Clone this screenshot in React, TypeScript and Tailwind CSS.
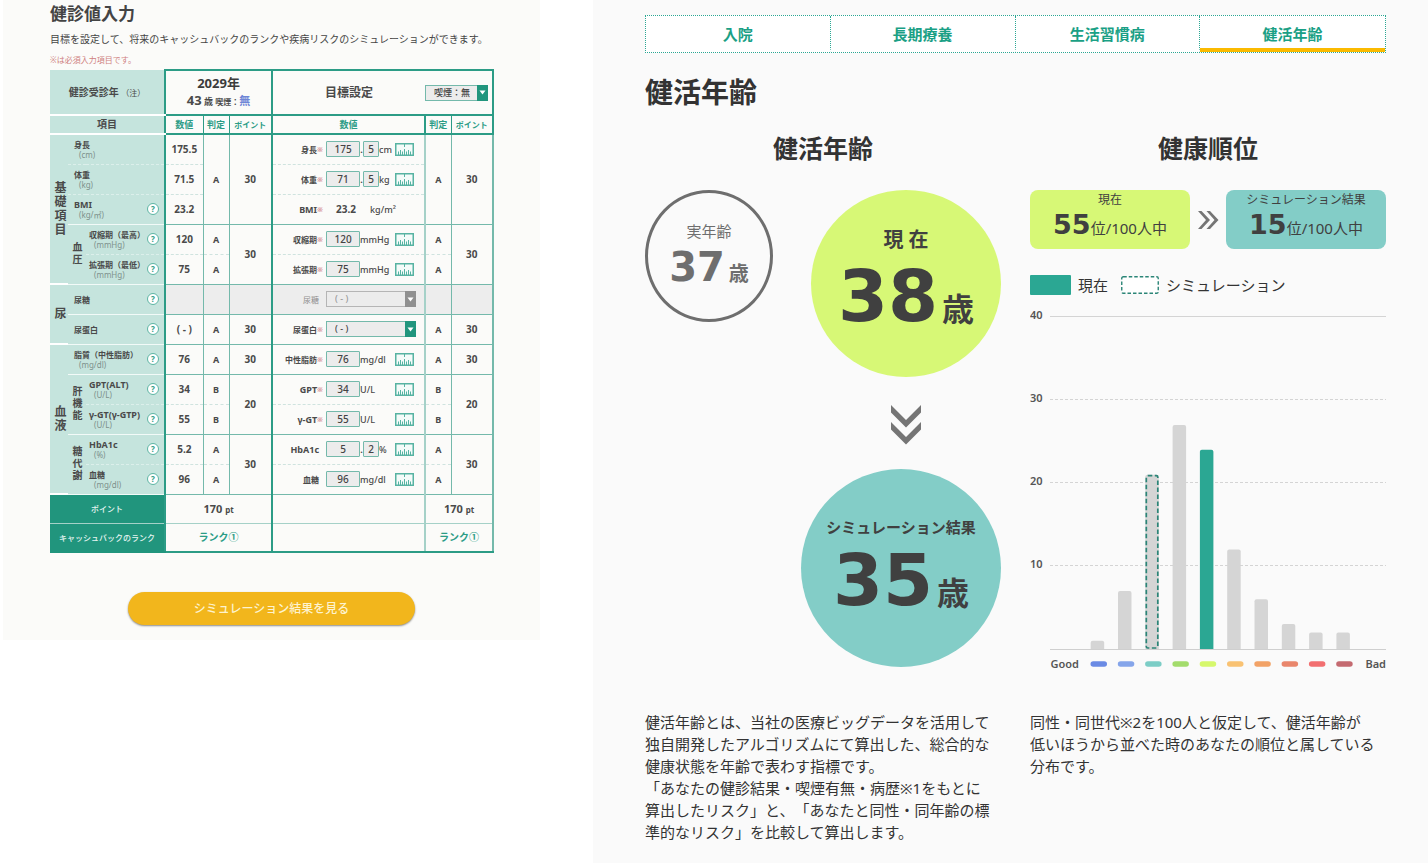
import { useState } from 'react';
import type { ReactNode } from 'react';
import clsx from 'clsx';

type Field =
    | { kind: 'number'; value: string; decimal?: string; unit: string }
    | { kind: 'text'; value: string; unit: string }
    | { kind: 'select'; value: string; disabled?: boolean };

type Row = {
    id: string;
    group?: { label: string; span: number };
    sub?: { label: string; span: number };
    nested?: boolean;
    label: string;
    unit?: string;
    help?: boolean;
    value: string;
    grade?: { label: string; span: number };
    point?: { label: string; span: number };
    target: string;
    required?: boolean;
    field: Field;
    line: 'solid' | 'dashed';
    gradeLine?: 'solid' | 'dashed';
    disabled?: boolean;
};

const ROWS: Row[] = [
    { id: 'height', group: { label: '基礎項目', span: 5 }, label: '身長', unit: '(cm)', value: '175.5', grade: { label: 'A', span: 3 }, point: { label: '30', span: 3 }, target: '身長', required: true, field: { kind: 'number', value: '175', decimal: '5', unit: 'cm' }, line: 'dashed', gradeLine: 'solid' },
    { id: 'weight', label: '体重', unit: '(kg)', value: '71.5', target: '体重', required: true, field: { kind: 'number', value: '71', decimal: '5', unit: 'kg' }, line: 'dashed' },
    { id: 'bmi', label: 'BMI', unit: '(kg/㎡)', help: true, value: '23.2', target: 'BMI', required: true, field: { kind: 'text', value: '23.2', unit: 'kg/m²' }, line: 'solid' },
    { id: 'systolic', sub: { label: '血圧', span: 2 }, nested: true, label: '収縮期（最高）', unit: '(mmHg)', help: true, value: '120', grade: { label: 'A', span: 1 }, point: { label: '30', span: 2 }, target: '収縮期', required: true, field: { kind: 'number', value: '120', unit: 'mmHg' }, line: 'dashed' },
    { id: 'diastolic', nested: true, label: '拡張期（最低）', unit: '(mmHg)', help: true, value: '75', grade: { label: 'A', span: 1 }, target: '拡張期', required: true, field: { kind: 'number', value: '75', unit: 'mmHg' }, line: 'solid' },
    { id: 'sugar', group: { label: '尿', span: 2 }, label: '尿糖', help: true, value: '', grade: { label: '', span: 1 }, point: { label: '', span: 1 }, target: '尿糖', field: { kind: 'select', value: '( - )', disabled: true }, line: 'solid', disabled: true },
    { id: 'protein', label: '尿蛋白', help: true, value: '( - )', grade: { label: 'A', span: 1 }, point: { label: '30', span: 1 }, target: '尿蛋白', required: true, field: { kind: 'select', value: '( - )' }, line: 'solid' },
    { id: 'lipid', group: { label: '血液', span: 5 }, label: '脂質（中性脂肪）', unit: '(mg/dl)', help: true, value: '76', grade: { label: 'A', span: 1 }, point: { label: '30', span: 1 }, target: '中性脂肪', required: true, field: { kind: 'number', value: '76', unit: 'mg/dl' }, line: 'solid' },
    { id: 'gpt', sub: { label: '肝機能', span: 2 }, nested: true, label: 'GPT(ALT)', unit: '(U/L)', help: true, value: '34', grade: { label: 'B', span: 1 }, point: { label: '20', span: 2 }, target: 'GPT', required: true, field: { kind: 'number', value: '34', unit: 'U/L' }, line: 'dashed' },
    { id: 'ggt', nested: true, label: 'γ-GT(γ-GTP)', unit: '(U/L)', help: true, value: '55', grade: { label: 'B', span: 1 }, target: 'γ-GT', required: true, field: { kind: 'number', value: '55', unit: 'U/L' }, line: 'solid' },
    { id: 'hba1c', sub: { label: '糖代謝', span: 2 }, nested: true, label: 'HbA1c', unit: '(%)', help: true, value: '5.2', grade: { label: 'A', span: 1 }, point: { label: '30', span: 2 }, target: 'HbA1c', field: { kind: 'number', value: '5', decimal: '2', unit: '%' }, line: 'dashed' },
    { id: 'glucose', nested: true, label: '血糖', unit: '(mg/dl)', help: true, value: '96', grade: { label: 'A', span: 1 }, target: '血糖', field: { kind: 'number', value: '96', unit: 'mg/dl' }, line: 'solid' },
];

const TABS = ['入院', '長期療養', '生活習慣病', '健活年齢'];

const BARS = [
    { value: 1, color: '#6a8ae4' },
    { value: 7, color: '#85a5ea' },
    { value: 21, color: '#7ccdc6', simulated: true },
    { value: 27, color: '#a3dc6c' },
    { value: 24, color: '#d6f86c', current: true },
    { value: 12, color: '#f9c272' },
    { value: 6, color: '#f2a266' },
    { value: 3, color: '#e9866c' },
    { value: 2, color: '#f26f70' },
    { value: 2, color: '#c46a70' },
];

const GREEN = 'border-[#2c9c86]';
const PALE = 'border-[#74b9ab]';

// kanji labels run one size smaller than latin ones
const labelSize = (text: string) => (/[一-龠]/.test(text) ? 'text-[8px]' : 'text-[9px]');

const RulerIcon = () => (
    <svg width="19" height="13" viewBox="0 0 19 13" aria-hidden="true">
        <rect x="0.75" y="0.75" width="17.5" height="11.5" fill="#f4fbf9" stroke="#57b3a2" strokeWidth="1.5" />
        <path d="M3.5 12V8.5M5.5 12V7M7.5 12V8.5M9.5 12V6M11.5 12V8.5M13.5 12V7M15.5 12V8.5" stroke="#57b3a2" strokeWidth="1" />
        <path d="M9.5 1v3" stroke="#57b3a2" strokeWidth="1" />
    </svg>
);

const HelpButton = ({ label }: { label: string }) => (
    <button
        type="button"
        aria-label={label}
        className="flex h-3 w-3 shrink-0 items-center justify-center rounded-full border border-[#5db5a4] bg-white text-[8px] leading-none font-bold text-[#2c9c86]"
    >
        ?
    </button>
);

const Dropdown = ({ id, value, label, disabled, className }: { id: string; value: string; label?: string; disabled?: boolean; className: string }) => (
    <span className={clsx('relative inline-block h-4', className)}>
        <select
            id={id}
            aria-label={label}
            disabled={disabled}
            defaultValue={value}
            className={clsx(
                'block h-4 w-full appearance-none border bg-[#ececec] py-0 pr-3 pl-2 text-[9px] leading-[14px] font-medium',
                disabled ? 'border-[#b5b5b5] text-[#999]' : 'border-[#74b9ab] text-[#444]',
            )}
        >
            <option>{value}</option>
        </select>
        <span
            className={clsx(
                'pointer-events-none absolute inset-y-0 right-0 flex w-[11px] items-center justify-center',
                disabled ? 'bg-[#909090]' : 'bg-[#21957d]',
            )}
        >
            <svg width="7" height="5" viewBox="0 0 7 5" aria-hidden="true">
                <path d="M0.5 0.5h6L3.5 4.5z" fill="#fff" />
            </svg>
        </span>
    </span>
);

const NumberBox = ({ id, value, label, className }: { id: string; value: string; label?: string; className: string }) => (
    <input
        id={id}
        aria-label={label}
        defaultValue={value}
        inputMode="numeric"
        className={clsx('h-4 rounded-[1px] border border-[#74b9ab] bg-[#ececec] p-0 text-center text-[10px] leading-[14px] font-medium text-[#444]', className)}
    />
);

const TargetField = ({ row }: { row: Row }) => {
    const { field } = row;

    return (
        <div className="flex items-center">
            <label
                htmlFor={field.kind === 'text' ? undefined : row.id}
                className={clsx(
                    'flex w-[50px] shrink-0 items-center justify-end whitespace-nowrap',
                    labelSize(row.target),
                    row.disabled && 'font-normal text-[#8f8f8f]',
                    !row.required && 'pr-1',
                )}
            >
                {row.target}
                {row.required && <span className="text-[7px] text-[#d99a9f]">※</span>}
            </label>
            {field.kind === 'select' && <Dropdown id={row.id} value={field.value} disabled={field.disabled} className="ml-[3px] w-[90px]" />}
            {field.kind === 'text' && (
                <>
                    <span className="ml-[3px] w-[40px] text-center text-[10px]">{field.value}</span>
                    <span className="ml-1 font-medium">{field.unit}</span>
                </>
            )}
            {field.kind === 'number' && (
                <>
                    <NumberBox id={row.id} value={field.value} className="ml-[3px] w-[34px]" />
                    {field.decimal && (
                        <>
                            <span className="w-[3px] text-center">.</span>
                            <NumberBox id={`${row.id}-decimal`} value={field.decimal} label={`${row.target} 小数`} className="w-4" />
                        </>
                    )}
                    <span className="flex-1 text-left font-medium">{field.unit}</span>
                    <button type="button" aria-label={`${row.target}を選択`} className="mr-[10px] shrink-0">
                        <RulerIcon />
                    </button>
                </>
            )}
        </div>
    );
};

const Vertical = ({ children, className }: { children: ReactNode; className: string }) => (
    <span className={clsx('inline-block align-middle [writing-mode:vertical-rl]', className)}>{children}</span>
);

const CheckupTable = () => (
    <table className="mt-[3px] w-full table-fixed border-collapse text-center text-[9px] leading-[11px] font-bold text-[#4a4a4a]">
        <colgroup>
            <col className="w-[18px]" />
            <col className="w-[18px]" />
            <col className="w-[79px]" />
            <col className="w-[38px]" />
            <col className="w-[26px]" />
            <col className="w-[43px]" />
            <col className="w-[153px]" />
            <col className="w-[26px]" />
            <col className="w-[42px]" />
        </colgroup>
        <thead>
            <tr className="h-[45px]">
                <th colSpan={3} className="border-b-2 border-white bg-[#c5e4dd] p-0 text-[10px]">
                    健診受診年 <span className="text-[8px] font-normal">（注）</span>
                </th>
                <th colSpan={3} className={clsx('border-2 p-0', GREEN)}>
                    <div className="text-[13px] leading-4 text-[#3c3c3c]">2029年</div>
                    <div className="leading-[18px]">
                        <span className="text-[13px]">43</span> 歳 <span className="text-[8px]">喫煙：</span>
                        <span className="text-[11px] text-[#6f86d6]">無</span>
                    </div>
                </th>
                <th className={clsx('border-y-2 p-0 text-[12px]', GREEN)}>目標設定</th>
                <td colSpan={2} className={clsx('border-y-2 border-r-2 p-0 pr-1', GREEN)}>
                    <Dropdown id="smoking" value="喫煙：無" label="喫煙" className="w-full" />
                </td>
            </tr>
            <tr className="h-[19px] text-[#2c9c86]">
                <th colSpan={3} className="border-b-2 border-white bg-[#c5e4dd] p-0 text-[10px] text-[#4a4a4a]">
                    項目
                </th>
                <th className={clsx('border-2 border-r p-0', GREEN)}>数値</th>
                <th className={clsx('border-b-2 p-0', GREEN)}>判定</th>
                <th className={clsx('border-2 border-l p-0 text-[8px]', GREEN)}>ポイント</th>
                <th className={clsx('border-2 p-0', GREEN)}>数値</th>
                <th className={clsx('border-2 border-r p-0', GREEN)}>判定</th>
                <th className={clsx('border-2 border-l p-0 text-[8px]', GREEN)}>ポイント</th>
            </tr>
        </thead>
        <tbody>
            {ROWS.map((row) => {
                const line = row.line === 'solid' ? 'border-b border-b-[#74b9ab]' : 'border-b border-b-[#cfe3df] [border-bottom-style:dashed]';
                const gradeLine = (row.gradeLine ?? row.line) === 'solid' ? 'border-b border-b-[#74b9ab]' : 'border-b border-b-[#cfe3df] [border-bottom-style:dashed]';
                const headLine = row.line === 'solid' ? 'border-b border-b-[#f2faf8]' : 'border-b border-b-[#dcefeb] [border-bottom-style:dashed]';
                const fill = row.disabled && 'bg-[#ededed]';

                return (
                    <tr key={row.id} className="h-[30px]">
                        {row.group && (
                            <th rowSpan={row.group.span} className="border-b-2 border-white bg-[#c5e4dd] p-0">
                                <Vertical className="text-[12px] leading-[14px] tracking-[2px]">{row.group.label}</Vertical>
                            </th>
                        )}
                        {row.sub && (
                            <th rowSpan={row.sub.span} className="border-b border-[#f2faf8] bg-[#c5e4dd] p-0">
                                <Vertical className="text-[10px] leading-3 tracking-[2px]">{row.sub.label}</Vertical>
                            </th>
                        )}
                        <th colSpan={row.nested ? 1 : 2} className={clsx('bg-[#c5e4dd] p-0', headLine)}>
                            <div className={clsx('flex items-center justify-between pr-[5px] text-left', row.nested ? 'pl-[3px]' : 'pl-[6px]')}>
                                <div className="whitespace-nowrap">
                                    <div className={labelSize(row.label)}>{row.label}</div>
                                    {row.unit && <div className="pl-[5px] text-[8px] leading-[10px] font-normal text-[#7d918c]">{row.unit}</div>}
                                </div>
                                {row.help && <HelpButton label={`${row.label}の説明`} />}
                            </div>
                        </th>
                        <td className={clsx('border-r border-l-2 border-r-[#74b9ab] border-l-[#2c9c86] p-0 text-[10px]', line, fill)}>{row.value}</td>
                        {row.grade && (
                            <td rowSpan={row.grade.span} className={clsx('border-r border-r-[#74b9ab] p-0', gradeLine, fill)}>
                                {row.grade.label}
                            </td>
                        )}
                        {row.point && (
                            <td rowSpan={row.point.span} className={clsx('border-b p-0 text-[10px]', PALE, fill)}>
                                {row.point.label}
                            </td>
                        )}
                        <td className={clsx('border-r-2 border-l-2 border-r-[#a5d1c8] border-l-[#2c9c86] p-0', line, fill)}>
                            <TargetField row={row} />
                        </td>
                        {row.grade && (
                            <td rowSpan={row.grade.span} className={clsx('border-r border-r-[#74b9ab] p-0', gradeLine, fill)}>
                                {row.grade.label}
                            </td>
                        )}
                        {row.point && (
                            <td rowSpan={row.point.span} className={clsx('border-r-2 border-b border-r-[#74b9ab] border-b-[#74b9ab] p-0 text-[10px]', fill)}>
                                {row.point.label}
                            </td>
                        )}
                    </tr>
                );
            })}
        </tbody>
        <tfoot>
            <tr className="h-[29px]">
                <th colSpan={3} className="border-b border-[#a5d1c8] bg-[#21957d] p-0 text-[8px] font-medium text-[#e4f4f1]">
                    ポイント
                </th>
                <td colSpan={3} className="border-x-2 border-b border-x-[#2c9c86] border-b-[#a5d1c8] p-0 text-[11px]">
                    170 <span className="text-[8px]">pt</span>
                </td>
                <td className="border-r-2 border-b border-[#a5d1c8] p-0" />
                <td colSpan={2} className="border-r-2 border-b border-r-[#74b9ab] border-b-[#a5d1c8] p-0 text-[11px]">
                    170 <span className="text-[8px]">pt</span>
                </td>
            </tr>
            <tr className="h-[29px] text-[10px] text-[#2c9c86]">
                <th colSpan={3} className="border-b-2 border-[#21957d] bg-[#21957d] p-0 text-[8px] font-medium text-[#e4f4f1]">
                    キャッシュバックのランク
                </th>
                <td colSpan={3} className={clsx('border-x-2 border-b-2 p-0', GREEN)}>
                    ランク①
                </td>
                <td className="border-r-2 border-b-2 border-r-[#a5d1c8] border-b-[#2c9c86] p-0" />
                <td colSpan={2} className="border-r-2 border-b-2 border-r-[#74b9ab] border-b-[#2c9c86] p-0">
                    ランク①
                </td>
            </tr>
        </tfoot>
    </table>
);

const CheckupPanel = () => (
    <section className="flex flex-col self-start bg-[#fbfbf9] px-[47px] pt-0.5 pb-[15px]">
        <h1 className="text-[17px] leading-6 font-bold text-[#444]">健診値入力</h1>
        <p className="mt-[5px] text-[10px] leading-4 whitespace-nowrap text-[#444]">
            目標を設定して、将来のキャッシュバックのランクや疾病リスクのシミュレーションができます。
        </p>
        <p className="mt-[7px] text-[8px] leading-3 text-[#cf7f80]">※は必須入力項目です。</p>
        <CheckupTable />
        <button
            type="button"
            className="mx-auto mt-[39px] h-[33px] w-[65%] rounded-full bg-[#f2b61c] text-[12px] font-medium text-[#fdf3cf] shadow-[0_1px_2px_rgba(0,0,0,0.45)]"
        >
            シミュレーション結果を見る
        </button>
    </section>
);

const Age = ({ value, size, unitSize }: { value: number; size: string; unitSize: string }) => (
    <div className="flex items-baseline gap-1 font-bold">
        <span className={clsx("font-['DejaVu_Sans',sans-serif]", size)}>{value}</span>
        <span className={unitSize}>歳</span>
    </div>
);

const AgeCircles = () => (
    <div className="mt-[27px] flex items-start justify-between">
        <div className="flex h-[132px] w-[128px] flex-col items-center rounded-[50%] border-3 border-[#6e6e6e] pt-[27px] text-[#6e6e6e]">
            <span className="text-[15px] leading-[22px]">実年齢</span>
            <Age value={37} size="text-[40px] leading-[50px]" unitSize="text-[20px]" />
        </div>
        <div className="flex flex-col items-end text-[#404040]">
            <div className="flex h-[187px] w-[190px] flex-col items-center rounded-[50%] bg-[#d7f876] pt-[36px]">
                <span className="text-[20px] leading-7 font-bold">現 在</span>
                <Age value={38} size="text-[72px] leading-[84px]" unitSize="text-[32px]" />
            </div>
            <div className="mt-7 flex w-[190px] justify-center">
                <svg width="30" height="40" viewBox="0 0 30 40" aria-hidden="true">
                    <path d="M0 0L15 15L30 0V7.5L15 22.5L0 7.5ZM0 17L15 32L30 17V24.5L15 39.5L0 24.5Z" fill="#757575" />
                </svg>
            </div>
            <div className="mt-6 flex h-[198px] w-[200px] flex-col items-center rounded-[50%] bg-[#83cdc7] pt-[47px]">
                <span className="text-[15px] leading-[22px] font-bold">シミュレーション結果</span>
                <Age value={35} size="text-[72px] leading-[84px]" unitSize="text-[32px]" />
            </div>
        </div>
    </div>
);

const RankCard = ({ label, rank, className }: { label: string; rank: number; className: string }) => (
    <div className={clsx('h-[59px] flex-1 rounded-lg text-center text-[#404040]', className)}>
        <div className="text-[12px] leading-5">{label}</div>
        <div className="text-[15px] leading-[30px]">
            <span className="font-['DejaVu_Sans',sans-serif] text-[27px] font-bold">{rank}</span>位/100人中
        </div>
    </div>
);

const RankChart = () => {
    const base = 343;
    const unit = 8.3;

    return (
        <svg viewBox="0 0 356 366" className="mt-[11px] w-full" role="img" aria-label="健康順位の分布">
            {[40, 30, 20, 10].map((tick) => {
                const y = Math.round(base - tick * unit) - 0.5;
                return (
                    <g key={tick}>
                        <text x="0" y={y + 2} fontSize="11" fontWeight="600" fill="#555">
                            {tick}
                        </text>
                        <line x1="20" x2="356" y1={y} y2={y} stroke="#d4d4d4" strokeDasharray={tick === 40 ? undefined : '3 2'} />
                    </g>
                );
            })}
            {BARS.map((bar, i) => {
                const x = 60.7 + i * 27.3;
                const top = base - bar.value * unit;
                return (
                    <g key={i}>
                        <path
                            d={`M${x} ${base}V${top + 2}q0 -2 2 -2h9.5q2 0 2 2V${base}z`}
                            fill={bar.current ? '#2ba793' : '#d5d5d5'}
                        />
                        {bar.simulated && (
                            <rect x={x + 1} y={top + 1} width="11.5" height={base - top - 2} rx="1.5" fill="none" stroke="#2b8577" strokeWidth="1.7" strokeDasharray="4.5 2.5" />
                        )}
                        <rect x={x - 0.2} y="355.2" width="16.5" height="5.6" rx="2.8" fill={bar.color} />
                    </g>
                );
            })}
            <line x1="20" x2="356" y1={base + 0.5} y2={base + 0.5} stroke="#cfcfcf" />
            <text x="20.5" y="362" fontSize="11" fontWeight="600" fill="#555">
                Good
            </text>
            <text x="356" y="362" fontSize="11" fontWeight="600" fill="#555" textAnchor="end">
                Bad
            </text>
        </svg>
    );
};

const ResultPanel = () => {
    const [tab, setTab] = useState('健活年齢');

    return (
        <section className="min-h-screen bg-[#fafafa] pt-[15px] pr-[42px] pb-4 pl-[52px] text-[#333]">
            <div role="tablist" className="grid h-[38px] grid-cols-4 border border-dotted border-[#2ba793] bg-white">
                {TABS.map((name) => (
                    <button
                        key={name}
                        type="button"
                        role="tab"
                        aria-selected={tab === name}
                        onClick={() => setTab(name)}
                        className={clsx(
                            'border-b-4 pt-1 text-[15px] leading-7 font-bold text-[#1aa085]',
                            tab === name ? 'border-b-[#fbba00]' : 'border-b-transparent',
                            name !== '健活年齢' && 'border-r border-r-[#2ba793] [border-right-style:dotted]',
                        )}
                    >
                        {name}
                    </button>
                ))}
            </div>
            <h2 className="mt-[21px] text-[28px] leading-9 font-bold">健活年齢</h2>
            <div className="mt-[23px] grid grid-cols-2 gap-[29px]">
                <div>
                    <h3 className="text-center text-[25px] leading-[30px] font-bold">健活年齢</h3>
                    <AgeCircles />
                    <p className="mt-11 text-[15px] leading-[22px] whitespace-nowrap [text-spacing-trim:space-all]">
                        健活年齢とは、当社の医療ビッグデータを活用して
                        <br />
                        独自開発したアルゴリズムにて算出した、総合的な
                        <br />
                        健康状態を年齢で表わす指標です。
                        <br />
                        「あなたの健診結果・喫煙有無・病歴※1をもとに
                        <br />
                        算出したリスク」と、「あなたと同性・同年齢の標
                        <br />
                        準的なリスク」を比較して算出します。
                    </p>
                </div>
                <div>
                    <h3 className="text-center text-[25px] leading-[30px] font-bold">健康順位</h3>
                    <div className="mt-[27px] flex items-center">
                        <RankCard label="現在" rank={55} className="bg-[#d7f876]" />
                        <svg width="36" height="20" viewBox="0 0 36 20" aria-hidden="true">
                            <path d="M8 1h3.5l8.5 9l-8.5 9H8l8-9ZM16.5 1H20l8.5 9L20 19h-3.5l8-9Z" fill="#757575" />
                        </svg>
                        <RankCard label="シミュレーション結果" rank={15} className="bg-[#83cdc7]" />
                    </div>
                    <div className="mt-[26px] flex h-5 items-center text-[15px]">
                        <span className="h-5 w-[41px] rounded-[1px] bg-[#2ba793]" />
                        <span className="ml-[7px]">現在</span>
                        <svg width="38" height="18" viewBox="0 0 38 18" className="ml-[13px]" aria-hidden="true">
                            <rect x="0.75" y="0.75" width="36.5" height="16.5" rx="1.5" fill="#fff" stroke="#2b8577" strokeWidth="1.4" strokeDasharray="3.5 2" />
                        </svg>
                        <span className="ml-[7px]">シミュレーション</span>
                    </div>
                    <RankChart />
                    <p className="mt-[39px] text-[15px] leading-[22px] whitespace-nowrap [text-spacing-trim:space-all]">
                        同性・同世代※2を100人と仮定して、健活年齢が
                        <br />
                        低いほうから並べた時のあなたの順位と属している
                        <br />
                        分布です。
                    </p>
                </div>
            </div>
        </section>
    );
};

export default function App() {
    return (
        <main
            lang="ja"
            className="grid min-h-screen grid-cols-[minmax(0,537fr)_minmax(0,835fr)] gap-[53px] bg-white pl-[3px] font-['Noto_Sans','Noto_Sans_CJK_JP',sans-serif]"
        >
            <CheckupPanel />
            <ResultPanel />
        </main>
    );
}
